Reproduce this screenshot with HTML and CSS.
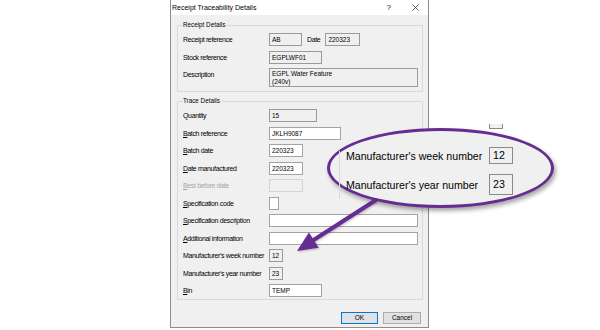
FILE: index.html
```html
<!DOCTYPE html>
<html lang="en">
<head>
    <meta charset="UTF-8">
    <title>Receipt Traceability Details</title>
    <link rel="stylesheet" href="styles.css">
</head>
<body>
<div class="page">

    <div class="dialog">
        <div class="titlebar">
            <span class="title">Receipt Traceability Details</span>
            <span class="help">?</span>
            <svg class="close" width="7" height="7" viewBox="0 0 7 7"><path d="M0.5 0.5 L6.5 6.5 M6.5 0.5 L0.5 6.5" stroke="#333" stroke-width="0.8"/></svg>
        </div>

        <div class="content">
            <fieldset class="group">
                <legend>Receipt Details</legend>
                <div class="rows">
                    <span class="lbl">Receipt reference</span>
                    <div class="inline">
                        <span class="fld ro w33">AB</span>
                        <span class="lbl">Date</span>
                        <span class="fld ro w35">220323</span>
                    </div>
                    <span class="lbl">Stock reference</span>
                    <span class="fld ro w53">EGPLWF01</span>
                    <span class="lbl top">Description</span>
                    <span class="fld ro w149 tall">EGPL Water Feature<br>(240v)</span>
                </div>
            </fieldset>

            <fieldset class="group trace">
                <legend>Trace Details</legend>
                <div class="rows">
                    <span class="lbl">Quantity</span>
                    <span class="fld ro w48">15</span>
                    <span class="lbl"><u>B</u>atch reference</span>
                    <span class="fld w72">JKLH9087</span>
                    <span class="lbl"><u>B</u>atch date</span>
                    <span class="fld w34">220323</span>
                    <span class="lbl"><u>D</u>ate manufactured</span>
                    <span class="fld w34">220323</span>
                    <span class="lbl off"><u>B</u>est before date</span>
                    <span class="fld dis w34"></span>
                    <span class="lbl"><u>S</u>pecification code</span>
                    <span class="fld w10"></span>
                    <span class="lbl"><u>S</u>pecification description</span>
                    <span class="fld w149"></span>
                    <span class="lbl"><u>A</u>dditional information</span>
                    <span class="fld w149"></span>
                    <span class="lbl">Manufacturer's week number</span>
                    <span class="fld ro w14">12</span>
                    <span class="lbl">Manufacturer's year number</span>
                    <span class="fld ro w14">23</span>
                    <span class="lbl"><u>B</u>in</span>
                    <span class="fld w53">TEMP</span>
                </div>
            </fieldset>

            <div class="buttons">
                <span class="btn default">OK</span>
                <span class="btn">Cancel</span>
            </div>
        </div>
    </div>

    <!-- callout over the dialog -->
    <span class="stub"></span>
    <div class="callout">
        <span class="big">Manufacturer's week number</span>
        <span class="bigfld">12</span>
        <span class="big">Manufacturer's year number</span>
        <span class="bigfld tallfld">23</span>
    </div>

    <svg class="arrow" width="600" height="330" viewBox="0 0 600 330">
        <line x1="376" y1="200" x2="312" y2="241" stroke="#672c91" stroke-width="4"/>
        <polygon points="297,251 318.7,247.7 308.9,232.5" fill="#672c91"/>
    </svg>

</div>
</body>
</html>
```

FILE: styles.css
```css
body {
    margin: 0;
    background-color: #fff;
    font-family: "Liberation Sans", Arial, sans-serif;
    color: #000;
}
.page {
    position: relative;
    width: 600px;
    height: 330px;
    overflow: hidden;
}
.dialog {
    margin-left: 170px;
    width: 259px;
    height: 328px;
    box-sizing: border-box;
    border: 1px solid #8c8c8c;
    border-top: none;
    background-color: #f0f0f0;
    display: flex;
    flex-direction: column;
}
.titlebar {
    height: 15px;
    background-color: #fff;
    display: flex;
    align-items: center;
    padding-left: 1px;
    font-size: 7px;
}
.title {
    flex: 1;
}
.help {
    margin-right: 21px;
    font-size: 7.5px;
}
.close {
    margin-right: 9px;
}
.content {
    padding: 0 5px 0 6px;
    display: flex;
    flex-direction: column;
}
.group {
    margin: 6px 0 0 0;
    padding: 4px 5px 4px 5px;
    border: 1px solid #d9d9d9;
    min-width: 0;
}
.group legend {
    padding: 0 1px 0 0;
    font-size: 6.3px;
    line-height: 8px;
}
.trace {
    margin-top: 5px;
    padding-bottom: 2px;
}
.rows {
    display: grid;
    grid-template-columns: 86px auto;
    grid-auto-rows: minmax(13px, auto);
    row-gap: 4.5px;
    align-items: center;
    justify-items: start;
}
.lbl {
    font-size: 7px;
    letter-spacing: -0.35px;
    white-space: nowrap;
    line-height: 13px;
}
.lbl.top {
    align-self: start;
}
.lbl.off {
    color: #a6a6a6;
}
.inline {
    display: flex;
    align-items: center;
    gap: 5px;
}
.fld {
    box-sizing: border-box;
    height: 13px;
    border: 1px solid #a3a3a3;
    background-color: #fff;
    font-size: 6.5px;
    line-height: 11px;
    padding-left: 2px;
    white-space: nowrap;
}
.fld.ro {
    background-color: #f0f0f0;
    border-color: #9a9a9a;
}
.fld.dis {
    background-color: #f0f0f0;
    border-color: #d4d4d4;
}
.fld.tall {
    height: 19px;
    line-height: 7.5px;
    padding-top: 1px;
    align-self: start;
}
.w10 { width: 10px; }
.w14 { width: 14px; }
.w33 { width: 33px; }
.w34 { width: 34px; }
.w35 { width: 35px; }
.w48 { width: 48px; }
.w53 { width: 53px; }
.w72 { width: 72px; }
.w149 { width: 149px; }
.buttons {
    margin-top: 12px;
    margin-right: 2px;
    display: flex;
    justify-content: flex-end;
    gap: 5px;
}
.btn {
    box-sizing: border-box;
    width: 38px;
    height: 12px;
    border: 1px solid #adadad;
    background-color: #e1e1e1;
    font-size: 6.5px;
    line-height: 10px;
    text-align: center;
}
.btn.default {
    width: 37px;
    border-color: #0078d7;
}
/* callout */
.callout {
    position: absolute;
    left: 327px;
    top: 128px;
    width: 227px;
    height: 80px;
    box-sizing: border-box;
    border: 3px solid #672c91;
    border-radius: 50%;
    background-color: #f0f0f0;
    box-shadow: 2px 3px 4px rgba(0,0,0,0.35);
    display: grid;
    grid-template-columns: 143px 24px;
    grid-template-rows: 17px 21px;
    row-gap: 10px;
    align-items: center;
    padding: 16px 0 0 16px;
}
.callout::before {
    content: "";
    position: absolute;
    left: 9px;
    top: 20px;
    bottom: 6px;
    border-left: 1px solid #dadada;
}
.big {
    font-size: 10.6px;
    white-space: nowrap;
}
.bigfld {
    box-sizing: border-box;
    width: 24px;
    height: 17px;
    border: 1px solid #8a8a8a;
    font-size: 10.6px;
    line-height: 15px;
    padding-left: 3px;
}
.bigfld.tallfld {
    height: 21px;
    line-height: 19px;
}
.stub {
    position: absolute;
    left: 489px;
    top: 124px;
    width: 14px;
    height: 5px;
    box-sizing: border-box;
    border: 1px solid #8a8a8a;
    border-top: none;
    background-color: #f0f0f0;
}
.arrow {
    position: absolute;
    left: 0;
    top: 0;
    pointer-events: none;
    filter: drop-shadow(1px 1px 1px rgba(0,0,0,0.25));
}
```
